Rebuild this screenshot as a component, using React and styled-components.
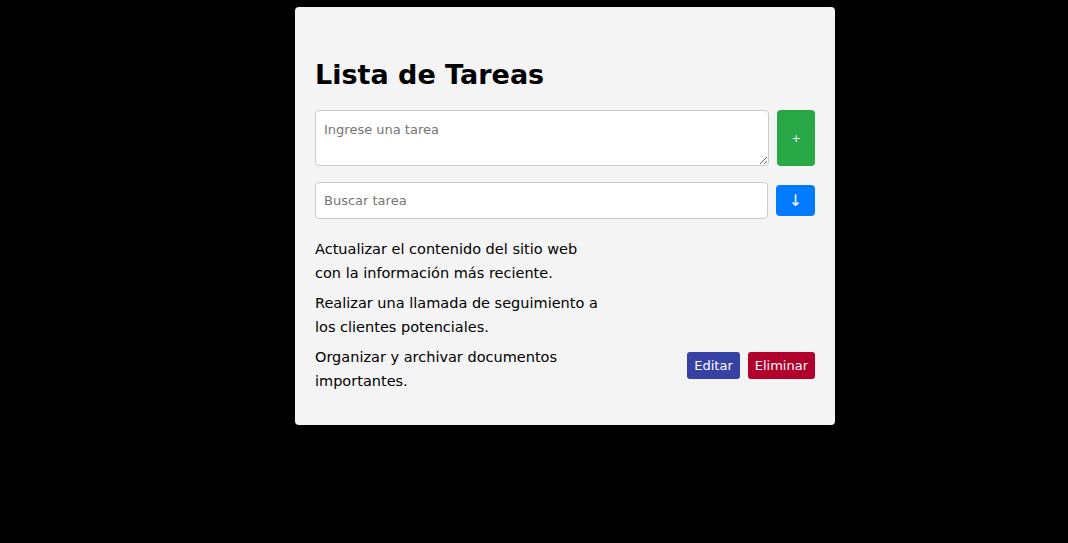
import React, { useState } from 'react'
import styled, { createGlobalStyle } from 'styled-components'

const GlobalStyle = createGlobalStyle`
  html, body {
    margin: 0;
    background: #000;
    font-family: "Comic Sans MS", "DejaVu Sans", sans-serif;
  }
`

const Card = styled.div`
  width: 540px;
  box-sizing: border-box;
  margin: 7px 0 0 295px;
  padding: 20px 20px 32px;
  background: #f4f4f4;
  border-radius: 4px;
`

const Title = styled.h1`
  margin: 28px 0 15px;
  font-size: 27px;
  line-height: 40px;
  font-weight: bold;
  color: #000;
`

const FormRow = styled.div`
  display: flex;
  align-items: ${p => (p.$stretch ? 'stretch' : 'center')};
  gap: 8px;
  margin-bottom: ${p => p.$mb || 0}px;
`

const TextArea = styled.textarea`
  flex: 1;
  height: 56px;
  box-sizing: border-box;
  padding: 11px 8px 8px;
  border: 1px solid #ccc;
  border-radius: 4px;
  font-family: inherit;
  font-size: 13px;
  resize: vertical;
  &::placeholder { color: #757575; }
`

const Input = styled.input`
  flex: 1;
  height: 37px;
  box-sizing: border-box;
  padding: 8px;
  border: 1px solid #ccc;
  border-radius: 4px;
  font-family: inherit;
  font-size: 13px;
  &::placeholder { color: #757575; }
`

const IconButton = styled.button`
  width: ${p => p.$w}px;
  height: ${p => p.$h}px;
  border: none;
  border-radius: 4px;
  background: ${p => p.$bg};
  color: #fff;
  font-family: inherit;
  font-size: ${p => p.$fs}px;
  padding: 0;
  cursor: pointer;
`

const TaskList = styled.ul`
  list-style: none;
  margin: 0;
  padding: 0;
  display: flex;
  flex-direction: column;
  gap: 6px;
`

const TaskItem = styled.li`
  display: flex;
  align-items: center;
  justify-content: space-between;
`

const TaskText = styled.span`
  width: 290px;
  font-size: 14.5px;
  line-height: 24px;
  color: #000;
`

const Actions = styled.div`
  display: flex;
  gap: 8px;
  margin-top: -7px;
`

const ActionButton = styled.button`
  height: 27px;
  padding: 0 7px;
  border: none;
  border-radius: 3px;
  background: ${p => p.$bg};
  color: #fff;
  font-family: inherit;
  font-size: 13px;
  cursor: pointer;
`

const initialTasks = [
  'Actualizar el contenido del sitio web con la información más reciente.',
  'Realizar una llamada de seguimiento a los clientes potenciales.',
  'Organizar y archivar documentos importantes.'
]

export default function App() {
  const [tasks] = useState(initialTasks)

  return (
    <>
      <GlobalStyle />
      <Card>
        <Title>Lista de Tareas</Title>
        <FormRow $stretch $mb={16}>
          <TextArea placeholder="Ingrese una tarea" />
          <IconButton $w={38} $h={56} $bg="#28a745" $fs={11}>+</IconButton>
        </FormRow>
        <FormRow $mb={18}>
          <Input placeholder="Buscar tarea" />
          <IconButton $w={39} $h={31} $bg="#007bff" $fs={16}>↓</IconButton>
        </FormRow>
        <TaskList>
          {tasks.map((t, i) => (
            <TaskItem key={i}>
              <TaskText>{t}</TaskText>
              {i === tasks.length - 1 && (
                <Actions>
                  <ActionButton $bg="#3641a4">Editar</ActionButton>
                  <ActionButton $bg="#b0002b">Eliminar</ActionButton>
                </Actions>
              )}
            </TaskItem>
          ))}
        </TaskList>
      </Card>
    </>
  )
}
